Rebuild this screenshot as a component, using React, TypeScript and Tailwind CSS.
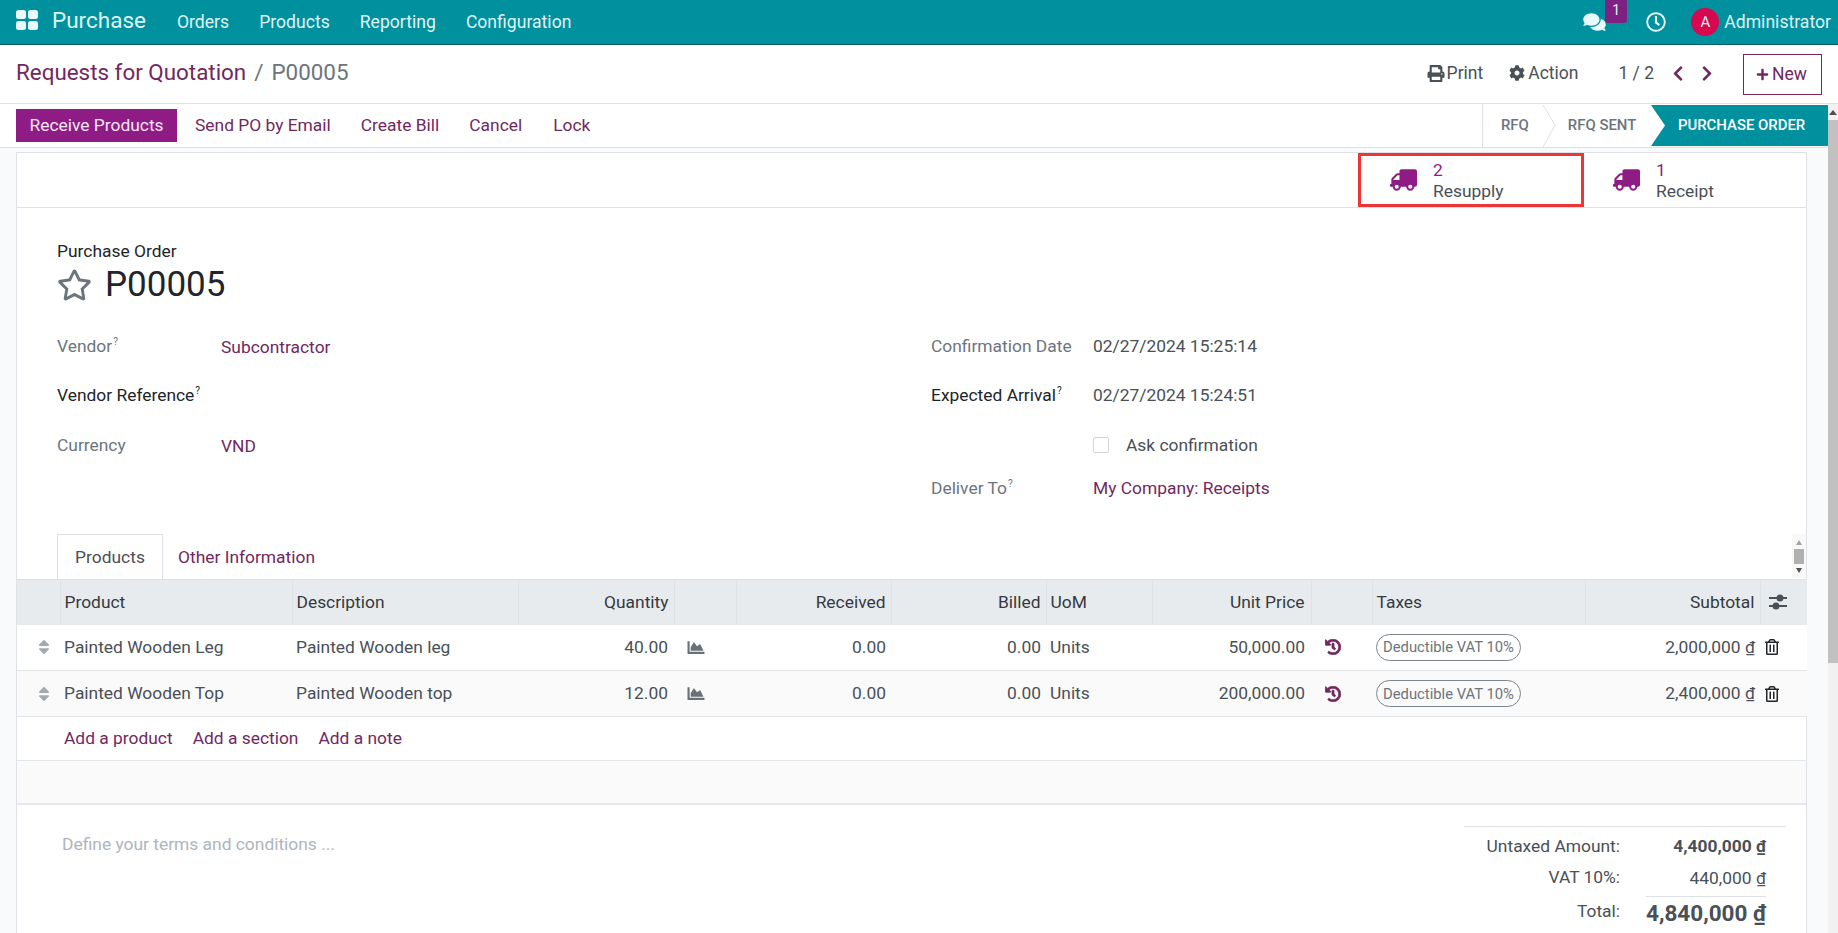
import { FaCog, FaChevronLeft, FaChevronRight, FaChartArea, FaComments, FaHistory, FaPlus, FaPrint, FaRegClock, FaRegStar, FaRegTrashAlt, FaSort, FaTruck } from "react-icons/fa";

const link = "text-[#71285f]";

function AppsIcon() {
  return (
    <svg width="22" height="20" viewBox="0 0 22 20" fill="#e8fbfb">
      <rect x="0" y="0" width="10" height="9" rx="2.5" />
      <rect x="12" y="0" width="10" height="9" rx="2.5" />
      <rect x="0" y="11" width="10" height="9" rx="2.5" />
      <rect x="12" y="11" width="10" height="9" rx="2.5" />
    </svg>
  );
}

function SlidersIcon() {
  return (
    <svg width="18" height="16" viewBox="0 0 18 16" fill="#495057">
      <rect x="0" y="3" width="18" height="2" />
      <circle cx="11" cy="4" r="3.5" />
      <rect x="0" y="11" width="18" height="2" />
      <circle cx="7" cy="12" r="3.5" />
    </svg>
  );
}

function Navbar() {
  return (
    <div className="h-[45px] shrink-0 flex items-center bg-[#01909e] border-b border-[#0a5f68] text-[#dff5f5] text-[17.6px]">
      <div className="ml-[16px] mb-[5px]"><AppsIcon /></div>
      <span className="ml-[14px] text-[22.5px] mb-[2px]">Purchase</span>
      <span className="ml-[31px]">Orders</span>
      <span className="ml-[30px]">Products</span>
      <span className="ml-[30px]">Reporting</span>
      <span className="ml-[30px]">Configuration</span>
      <div className="ml-auto flex items-center">
        <div className="relative mr-[40px]">
          <FaComments className="w-[23px] h-[20px] text-[#e8fbfb]" />
          <span className="absolute left-[22px] top-[-13px] w-[22px] h-[24px] rounded-[3px] bg-[#7f2183] text-[14px] text-center leading-[22px]">1</span>
        </div>
        <FaRegClock className="w-[20px] h-[20px] text-[#e8fbfb]" />
        <div className="ml-[25px] w-[28px] h-[28px] rounded-full bg-[#d6084f] text-center leading-[28px] text-[15px]">A</div>
        <span className="ml-[5px] mr-[7px] text-[17.6px]">Administrator</span>
      </div>
    </div>
  );
}

function ControlPanel() {
  return (
    <div className="h-[59px] shrink-0 flex items-center border-b border-[#dee2e6] bg-white pl-[16px] pb-[2px]">
      <span className={`text-[22.4px] ${link}`}>Requests for Quotation</span>
      <span className="text-[22.4px] text-[#6c757d] ml-[8px]">/</span>
      <span className="text-[22.4px] text-[#6c757d] ml-[8px]">P00005</span>
      <div className="ml-auto flex items-center text-[17.5px] text-[#495057]">
        <FaPrint className="w-[18px] h-[17px]" />
        <span className="ml-[2px]">Print</span>
        <FaCog className="ml-[26px] w-[16px] h-[16px]" />
        <span className="ml-[3px]">Action</span>
        <span className="ml-[40px]">1 / 2</span>
        <FaChevronLeft className={`ml-[17px] w-[14px] h-[17px] ${link}`} />
        <FaChevronRight className={`ml-[15px] w-[14px] h-[17px] ${link}`} />
        <div className={`ml-[29px] mr-[16px] mt-[2px] h-[41px] w-[79px] flex items-center justify-center border border-[#71285f] ${link}`}>
          <FaPlus className="w-[13px] h-[13px] mr-[3px] -ml-[2px]" />
          New
        </div>
      </div>
    </div>
  );
}

function StatusBar() {
  return (
    <div className="h-[44px] shrink-0 flex items-center border-b border-[#dee2e6] bg-white pl-[16px] text-[17.4px]">
      <div className="h-[33px] w-[161px] bg-[#8f1c85] text-[#f3e6f2] flex items-center justify-center">Receive Products</div>
      <span className={`ml-[18px] mb-[1px] ${link}`}>Send PO by Email</span>
      <span className={`ml-[30px] mb-[1px] ${link}`}>Create Bill</span>
      <span className={`ml-[30px] mb-[1px] ${link}`}>Cancel</span>
      <span className={`ml-[31px] mb-[1px] ${link}`}>Lock</span>
      <div className="ml-auto flex items-stretch self-stretch text-[14.9px] font-medium">
        <div className="relative w-[169px] border-l border-[#dee2e6] flex items-center text-[#6c757d]">
          <span className="ml-[18px]">RFQ</span>
          <span className="ml-[39px] whitespace-nowrap">RFQ SENT</span>
          <svg className="absolute left-[59px] top-0" width="14" height="44" viewBox="0 0 14 44" fill="none" stroke="#dee2e6">
            <path d="M1 1 L13 21 L1 43" />
          </svg>
        </div>
        <div className="my-[1px] w-[177px] bg-[#01909e] text-white flex items-center pl-[27px] whitespace-nowrap [clip-path:polygon(0_0,100%_0,100%_100%,0_100%,14px_50%)]">
          PURCHASE ORDER
        </div>
      </div>
    </div>
  );
}

function StatButton({ count, label, w, boxed }: { count: string; label: string; w: string; boxed?: boolean }) {
  return (
    <div className={`${w} h-full flex items-center ${boxed ? "border-[3px] border-[#ee3535] pl-[29px]" : "pl-[29px]"}`}>
      <FaTruck className="w-[27px] h-[24px] text-[#8f1c85] -scale-x-100" />
      <div className="ml-[16px] text-[17.4px] leading-[21px] pt-[2px]">
        <div className="text-[#8f1c85]">{count}</div>
        <div className="text-[#495057]">{label}</div>
      </div>
    </div>
  );
}

function Sup() {
  return <sup className="text-[10px] ml-[1px] top-[-7px]">?</sup>;
}

function Field({ label, dark, value, left, labelW }: { label: string; dark?: boolean; value?: string; left?: boolean; labelW: string }) {
  return (
    <div className="flex items-center h-[20px]">
      <div className={`${labelW} ${dark ? "text-[#212529]" : "text-[#6c757d]"}`}>
        {label}
        {left && <Sup />}
      </div>
      {value && <div className="mt-[2px] text-[#71285f]">{value}</div>}
    </div>
  );
}

function FormHeader() {
  return (
    <div className="h-[326px] shrink-0 pt-[33px] pl-[40px] text-[17.4px]">
      <div className="text-[#212529] leading-[20px]">Purchase Order</div>
      <div className="flex items-center h-[44px] mt-[2px]">
        <FaRegStar className="w-[35px] h-[34px] text-[#6c757d]" />
        <span className="ml-[13px] text-[35px] text-[#212529]">P00005</span>
      </div>
      <div className="flex mt-[26px]">
        <div className="w-[874px] flex flex-col pt-[3px]">
          <Field label="Vendor" left value="Subcontractor" labelW="w-[164px]" />
          <div className="mt-[29px]"><Field label="Vendor Reference" left dark labelW="w-[164px]" /></div>
          <div className="mt-[30px]"><Field label="Currency" value="VND" labelW="w-[164px]" /></div>
        </div>
        <div className="flex flex-col text-[#495057]">
          <div className="flex items-center h-[20px] mt-[3px]">
            <div className="w-[162px] text-[#6c757d]">Confirmation Date</div>02/27/2024 15:25:14
          </div>
          <div className="flex items-center h-[20px] mt-[29px]">
            <div className="w-[162px] text-[#212529]">Expected Arrival<Sup /></div>02/27/2024 15:24:51
          </div>
          <div className="flex items-center h-[20px] mt-[30px] pl-[162px]">
            <span className="w-[16px] h-[16px] border border-[#ced4da] rounded-[2px] bg-white" />
            <span className="ml-[17px]">Ask confirmation</span>
          </div>
          <div className="flex items-center h-[20px] mt-[23px]">
            <div className="w-[162px] text-[#6c757d]">Deliver To<Sup /></div>
            <span className="text-[#71285f]">My Company: Receipts</span>
          </div>
        </div>
      </div>
    </div>
  );
}

function Tabs() {
  return (
    <div className="h-[45px] shrink-0 relative flex text-[17.4px] pl-[40px]">
      <div className="h-[45px] w-[106px] border border-b-0 border-[#dee2e6] bg-white flex items-center justify-center text-[#495057] z-10 pt-[1px]">Products</div>
      <div className="flex items-center ml-[15px] text-[#71285f] pt-[2px]">Other Information</div>
      {/* tiny inner scrollbar */}
      <div className="absolute right-0 top-0 h-[44px] w-[14px] bg-[#f8f8f8] flex flex-col items-center">
        <span className="mt-[6px] border-x-[3px] border-b-[5px] border-x-transparent border-b-[#a3a3a3]" />
        <span className="mt-[4px] h-[15px] w-[10px] bg-[#b0b0b0]" />
        <span className="mt-[4px] border-x-[3px] border-t-[5px] border-x-transparent border-t-[#505050]" />
      </div>
    </div>
  );
}

const headTh = "border-r border-[#dfe3e7] font-normal text-[#343a40] pl-[4px] pr-[5px]";
const cell = "pl-[4px] pr-[5px]";

function Row({ name, desc, qty, price, total, shade }: { name: string; desc: string; qty: string; price: string; total: string; shade?: boolean }) {
  return (
    <tr className={`h-[46px] border-b border-[#e3e6e9] text-[#495057] ${shade ? "bg-[#fafafa]" : "bg-white"}`}>
      <td className="pl-[21px]"><FaSort className="w-[12px] h-[18px] text-[#a4a9ae]" /></td>
      <td className={cell}>{name}</td>
      <td className={cell}>{desc}</td>
      <td className="pl-[4px] pr-[6px] text-right">{qty}</td>
      <td className="pl-[11px]"><FaChartArea className="w-[22px] h-[17px] text-[#68717a]" /></td>
      <td className={`${cell} text-right`}>0.00</td>
      <td className={`${cell} text-right`}>0.00</td>
      <td className={cell}>Units</td>
      <td className="pl-[4px] pr-[6px] text-right">{price}</td>
      <td className="pl-[14px]"><FaHistory className="w-[16px] h-[16px] text-[#71285f]" stroke="currentColor" strokeWidth={25} /></td>
      <td className={cell}>
        <span className="inline-flex items-center h-[27px] w-[145px] justify-center border border-[#7d858c] rounded-[14px] text-[14.8px] text-[#6c757d] whitespace-nowrap">Deductible VAT 10%</span>
      </td>
      <td className={`${cell} text-right`}>{total} <span className="underline">₫</span></td>
      <td className="pl-[5px]"><FaRegTrashAlt className="w-[14px] h-[16px] text-[#212529]" /></td>
    </tr>
  );
}

function Lines() {
  return (
    <table className="w-[1790px] table-fixed border-collapse text-[17.4px] shrink-0">
      <colgroup>
        <col className="w-[43px]" />
        <col className="w-[232px]" />
        <col className="w-[226px]" />
        <col className="w-[156px]" />
        <col className="w-[62px]" />
        <col className="w-[155px]" />
        <col className="w-[155px]" />
        <col className="w-[106px]" />
        <col className="w-[159px]" />
        <col className="w-[61px]" />
        <col className="w-[213px]" />
        <col className="w-[175px]" />
        <col className="w-[47px]" />
      </colgroup>
      <thead>
        <tr className="h-[45px] bg-[#e8ebee] border-t border-[#dee2e6]">
          <th className={headTh} />
          <th className={`${headTh} text-left`}>Product</th>
          <th className={`${headTh} text-left`}>Description</th>
          <th className={`${headTh} text-right`}>Quantity</th>
          <th className={headTh} />
          <th className={`${headTh} text-right`}>Received</th>
          <th className={`${headTh} text-right`}>Billed</th>
          <th className={`${headTh} text-left`}>UoM</th>
          <th className="border-r border-[#dfe3e7] font-normal text-[#343a40] pl-[4px] pr-[6px] text-right">Unit Price</th>
          <th className={headTh} />
          <th className={`${headTh} text-left`}>Taxes</th>
          <th className={`${headTh} text-right`}>Subtotal</th>
          <th className="pl-[8px]"><SlidersIcon /></th>
        </tr>
      </thead>
      <tbody>
        <Row name="Painted Wooden Leg" desc="Painted Wooden leg" qty="40.00" price="50,000.00" total="2,000,000" />
        <Row name="Painted Wooden Top" desc="Painted Wooden top" qty="12.00" price="200,000.00" total="2,400,000" shade />
        <tr className="h-[44px] border-b border-[#e3e6e9] text-[#71285f]">
          <td />
          <td colSpan={4} className={cell}>
            <span>Add a product</span>
            <span className="ml-[20px]">Add a section</span>
            <span className="ml-[20px]">Add a note</span>
          </td>
        </tr>
      </tbody>
    </table>
  );
}

function Totals() {
  return (
    <div className="flex-1 flex justify-between text-[17.4px]">
      <div className="ml-[45px] mt-[26px] text-[#adb5bd]">Define your terms and conditions ...</div>
      <div className="mr-[20px] mt-[21px] w-[322px] h-fit border-t border-[#dee2e6] text-[#495057] pt-[3px]">
        <div className="flex justify-end items-center h-[32px]">
          <span>Untaxed Amount:</span>
          <span className="w-[146px] mr-[20px] text-right font-bold">4,400,000 <span className="underline">₫</span></span>
        </div>
        <div className="flex justify-end items-center h-[33px]">
          <span className="mb-[2px]">VAT 10%:</span>
          <span className="w-[146px] mr-[20px] text-right">440,000 <span className="underline">₫</span></span>
        </div>
        <div className="flex justify-end items-center h-[36px]">
          <span className="mb-[3px]">Total:</span>
          <span className="ml-[26px] w-[120px] mr-[20px] text-right text-[22.5px] font-bold border-t border-[#dee2e6] whitespace-nowrap">4,840,000 <span className="underline">₫</span></span>
        </div>
      </div>
    </div>
  );
}

function PageScrollbar() {
  return (
    <div className="w-[10px] shrink-0 bg-[#f1f1f1] flex flex-col items-center">
      <span className="mt-[6px] border-x-[4px] border-b-[5px] border-x-transparent border-b-[#505050]" />
      <div className="mt-[5px] w-full h-[543px] bg-[#c1c1c1]" />
    </div>
  );
}

export default function App() {
  return (
    <div className="w-[1838px] h-[933px] overflow-hidden flex flex-col bg-white font-['Roboto',sans-serif]">
      <Navbar />
      <ControlPanel />
      <div className="flex-1 flex min-h-0">
        <div className="w-[1828px] flex flex-col min-h-0">
          <StatusBar />
          <div className="flex-1 min-h-0 bg-[#f9fafb] pl-[16px] pt-[4px] pr-[21px]">
            <div className="h-[800px] border border-[#dee2e6] bg-white flex flex-col">
              <div className="h-[55px] shrink-0 border-b border-[#dee2e6] flex justify-end">
                <StatButton count="2" label="Resupply" w="w-[226px]" boxed />
                <StatButton count="1" label="Receipt" w="w-[222px]" />
              </div>
              <FormHeader />
              <Tabs />
              <Lines />
              <div className="h-[44px] shrink-0 bg-[#fafafa] border-b-2 border-[#e5e7ea]" />
              <Totals />
            </div>
          </div>
        </div>
        <PageScrollbar />
      </div>
    </div>
  );
}
